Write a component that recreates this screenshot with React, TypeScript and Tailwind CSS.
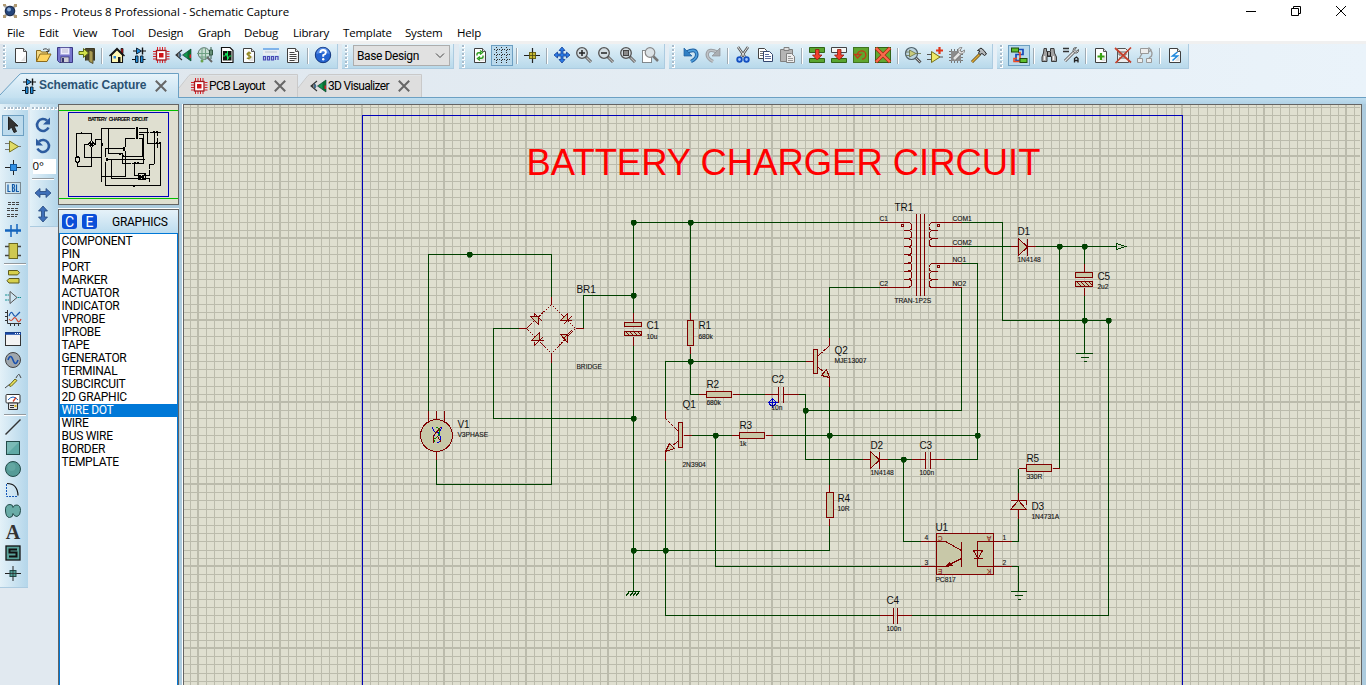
import React from "react";

type P = { children: React.ReactNode; s?: number };

const Ico = ({ children, s = 18 }: P) => (
  <svg width={s} height={s} viewBox="0 0 18 18" fill="none" className="shrink-0">
    {children}
  </svg>
);

const Page = ({ children }: { children?: React.ReactNode }) => (
  <Ico>
    <path d="M3.5 2.5h8l3 3v11h-11z" fill="#fdfdfd" stroke="#3f3f3f" />
    <path d="M5 15h8.5V9L9 15z" fill="#e2e2e2" />
    <path d="M11.5 2.5v3h3" stroke="#555" fill="#ddd" />
    {children}
  </Ico>
);

const Lens = ({ children }: { children?: React.ReactNode }) => (
  <Ico>
    <path d="M10.5 10.5l5.5 5.5" stroke="#5d5d5d" strokeWidth="3" />
    <path d="M11.5 11.5l4.5 4.5" stroke="#b9b9b9" strokeWidth="1.2" />
    <circle cx="7" cy="7" r="5.3" fill="#d3dde2" stroke="#555" strokeWidth="1.3" />
    {children}
  </Ico>
);

const SchemIcon = () => (
  <Ico>
    <path d="M3 5h3M12 5h4M2 13.500h4M12 13.500h3.500" stroke="#111" strokeWidth="1.200" />
    <path d="M6.500 2l5 3-5 3z" fill="#1f8fe0" stroke="#123" />
    <path d="M12.500 1.500v7" stroke="#111" strokeWidth="1.400" />
    <path d="M5.500 10h2.500v6.500H5.500zM10.500 10H13v6.500h-2.500z" fill="#1f8fe0" stroke="#123" />
  </Ico>
);

const PcbIcon = () => (
  <Ico>
    <path d="M5.500 1v3M8 1v3M10.500 1v3M13 1v3M5.500 14v3M8 14v3M10.500 14v3M13 14v3M1 5.500h3M1 8h3M1 10.500h3M1 13h3M14.500 5.500h3M14.500 8h3M14.500 10.500h3M14.500 13h3" stroke="#d8232a" />
    <rect x="4.500" y="4.500" width="9.500" height="9.500" fill="#fff" stroke="#a51a1e" strokeWidth="1.300" />
    <rect x="7" y="7" width="4.500" height="4.500" fill="#d01318" />
  </Ico>
);

const VisIcon = () => (
  <Ico>
    <path d="M8 4L2 9l6 5M2 9h3" stroke="#333" strokeWidth="1.100" />
    <path d="M5.500 6.500q3 2.500 0 5.500z" fill="#2f9bea" stroke="#345" strokeWidth=".7" />
    <path d="M8.500 9l8.500-6v12z" fill="#14994e" stroke="#123" strokeWidth=".6" />
    <path d="M13.500 5.500l3.500-2.500v12l-3.500-2.500z" fill="#0b6b32" />
    <path d="M15.500 8.500H17V12h-1.500z" fill="#d2222a" />
  </Ico>
);

const ic = {
  new: <Page />,
  open: (
    <Ico>
      <path d="M2.500 15.500v-11h4l1 1.500h6v2" fill="#f4d983" stroke="#8a6a1d" />
      <path d="M2.500 15.500L6 8h11l-4 7.500z" fill="#ffd45f" stroke="#8a6a1d" />
      <path d="M9 3.500q4-2 5.500 1.500M15 2.500v3h-3" stroke="#444" />
    </Ico>
  ),
  save: (
    <Ico>
      <path d="M1.500 1.500h15v15h-13l-2-2z" fill="#7674cc" stroke="#3a3885" />
      <rect x="4.500" y="2" width="9" height="6.500" fill="#eef" stroke="#aaaadd" strokeWidth=".6" />
      <path d="M6 4h6M6 6h6" stroke="#b9b9cf" />
      <rect x="5" y="11" width="8" height="5.500" fill="#cfcfd8" stroke="#34346b" strokeWidth=".7" />
      <rect x="6" y="12" width="2" height="4" fill="#34346b" />
    </Ico>
  ),
  exit: (
    <Ico>
      <path d="M7.500 14.500v-12h9v12" fill="#4d4730" stroke="#3d3820" />
      <path d="M11 4l4 1.500v12l-4-2z" fill="#a99b52" stroke="#3d3820" strokeWidth=".8" />
      <path d="M1 5.500h4.500v-3l5 4.500-5 4.500v-3H1z" fill="#d3e14a" stroke="#5c6a14" />
    </Ico>
  ),
  home: (
    <Ico>
      <path d="M13 2.500h2v5h-2z" fill="#d01318" stroke="#111" strokeWidth=".8" />
      <path d="M3.500 9v7.500h11V9L9 3.500z" fill="#fff8b5" stroke="#111" strokeWidth="1.100" />
      <path d="M1.500 10L9 2.500l7.500 7.500" stroke="#111" strokeWidth="1.400" />
      <path d="M5.500 10h2.500v2.500H5.500z" fill="#2d86d8" />
      <path d="M10 11h2.500v5.500H10z" fill="#151515" />
    </Ico>
  ),
  gerber: (
    <Ico>
      <circle cx="8" cy="7.500" r="5.800" fill="#c6dcd2" stroke="#5c7469" />
      <path d="M1 7.500h12M3.500 11h9M6 2v12M9.500 2v12" stroke="#6fa184" />
      <path d="M15 1v12M13.500 4h3v5h-3z" stroke="#345a46" fill="#98c6a8" />
      <path d="M11 11l5 5" stroke="#666" strokeWidth="2" />
      <circle cx="6" cy="15" r="1.500" fill="#69a34b" />
    </Ico>
  ),
  explorer: (
    <Ico>
      <path d="M3.500 1.500h8.500l3 3v12H3.500z" fill="#fff" stroke="#111" strokeWidth="1.200" />
      <rect x="5" y="5" width="8.500" height="9.500" fill="#101810" />
      <path d="M5 10h2l1-3 2 6 1.200-3h2.300M9.500 5v9" stroke="#13e35b" />
    </Ico>
  ),
  bill: (
    <Page>
      <path d="M11 7.500Q9 6 7.500 7.200T9 9.500t1.500 2.300T6.800 12M9 5.500v8" stroke="#8c8014" strokeWidth="1.200" />
    </Page>
  ),
  code: (
    <Ico>
      <path d="M1 2h16v2H1z" fill="#7fb3ea" />
      <path d="M1 4h16v5H1z" fill="#e9edf2" />
      <path d="M3 6h12" stroke="#b9c3cf" />
      <path d="M1.500 10.500h2v3.500h-2zM5.500 10.500h2v3.500h-2zM9.500 10.500h2v3.500h-2zM13.500 14v-3.500h2.500V14" stroke="#4a48b5" strokeWidth="1.200" />
    </Ico>
  ),
  notes: (
    <Page>
      <path d="M5.500 6.500h5M5.500 8.500h7M5.500 10.500h7M5.500 12.500h7M5.500 14.500h5" stroke="#444" />
    </Page>
  ),
  help: (
    <Ico>
      <circle cx="9" cy="9" r="7.700" fill="#2563cf" stroke="#12367f" />
      <path d="M2.500 8a6.500 6.500 0 0113 0q-6-3-13 0z" fill="#6a9cec" opacity=".7" />
      <path d="M6.300 7q0-3 2.800-3t2.800 2.500Q11.900 8 9.200 9.200v1.500" stroke="#fff" strokeWidth="1.900" />
      <circle cx="9.200" cy="13.300" r="1.200" fill="#fff" />
    </Ico>
  ),
  refresh: (
    <Page>
      <path d="M6 9.500V8q0-1.500 4-1.500M9 4.500l2.500 2L9 8.500M12 9.500V11q0 1.500-4 1.500M9 10.500l-2.500 2 2.500 2" stroke="#2c9d1d" strokeWidth="1.400" />
    </Page>
  ),
  grid: (
    <svg width="18" height="18" viewBox="0 0 18 18" fill="none" shapeRendering="crispEdges" className="shrink-0">
      <path d="M1 3.500h16M1 8.500h16M1 13.500h16M3.500 1v16M8.500 1v16M13.500 1v16" stroke="#2b2b2b" strokeDasharray="1 1.500" />
    </svg>
  ),
  origin: (
    <Ico>
      <path d="M1 9.500h16M9.500 2v15" stroke="#222" strokeWidth="1.200" />
      <rect x="6.500" y="6.500" width="6" height="6" fill="#c6bb35" stroke="#6c651a" />
      <path d="M9.500 6v7M6 9.500h7" stroke="#4b4712" strokeWidth=".8" />
    </Ico>
  ),
  pan: (
    <Ico>
      <path d="M9 1l3 3.500h-2V8h3.500V6L17 9l-3.500 3v-2H10v3.500h2L9 17l-3-3.500h2V10H4.500v2L1 9l3.500-3v2H8V4.500H6z" fill="#2b7be6" stroke="#143f96" strokeWidth=".8" />
    </Ico>
  ),
  zin: <Lens><path d="M4 7h6M7 4v6" stroke="#222" strokeWidth="1.500" /></Lens>,
  zout: <Lens><path d="M4 7h6" stroke="#222" strokeWidth="1.500" /></Lens>,
  zall: <Lens><rect x="4.500" y="4.500" width="5" height="5" fill="#8a8a8a" stroke="#444" /></Lens>,
  zarea: (
    <Ico>
      <rect x="1.500" y="4.500" width="9" height="12" fill="#fff" stroke="#222" strokeDasharray="1 1" />
      <path d="M12 10l5 5" stroke="#777" strokeWidth="2.500" />
      <circle cx="9" cy="6.500" r="4.800" fill="#dbe2e6" stroke="#888" strokeWidth="1.200" />
    </Ico>
  ),
  undo: (
    <Ico>
      <path d="M4 6.500Q13 2 14.500 7T9 15.500" stroke="#1f5f9f" strokeWidth="3.600" />
      <path d="M4 6.500Q13 2 14.500 7T9 15.500" stroke="#4fa0dd" strokeWidth="1.600" />
      <path d="M2 2v8h8z" fill="#2f7fc4" stroke="#1f5f9f" strokeWidth=".7" />
    </Ico>
  ),
  redo: (
    <Ico>
      <path d="M14 6.500Q5 2 3.500 7T9 15.500" stroke="#9b9fa3" strokeWidth="3.400" />
      <path d="M14 6.500Q5 2 3.500 7T9 15.500" stroke="#c0c4c8" strokeWidth="1.400" />
      <path d="M16 2v8H8z" fill="#aaaeb2" stroke="#8d9195" strokeWidth=".7" />
    </Ico>
  ),
  cut: (
    <Ico>
      <path d="M4 1l7 10M14 1L7 11" stroke="#555" strokeWidth="2.600" />
      <path d="M4 1l7 10M14 1L7 11" stroke="#e6e6e6" strokeWidth="1" />
      <circle cx="5.500" cy="13.500" r="2.300" stroke="#1450c0" strokeWidth="1.800" fill="#9dc3ff" />
      <circle cx="12.500" cy="13.500" r="2.300" stroke="#1450c0" strokeWidth="1.800" fill="#9dc3ff" />
    </Ico>
  ),
  copy: (
    <Ico>
      <path d="M2.500 2.500h6l2 2v8h-8z" fill="#fff" stroke="#444" />
      <path d="M4 5.500h4M4 7.500h4M4 9.500h4" stroke="#777" />
      <path d="M7.500 5.500h6l3 3v7h-9z" fill="#fff" stroke="#34466f" />
      <path d="M9 8.500h4M9 10.500h6M9 12.500h6" stroke="#5c6fa0" />
    </Ico>
  ),
  paste: (
    <Ico>
      <path d="M2.500 3.500h12v12h-12z" fill="#b5b5b5" stroke="#808080" />
      <path d="M6 1.500h5v3H6z" fill="#ddd" stroke="#808080" />
      <path d="M8.500 7.500h5l3 3v6h-8z" fill="#eee" stroke="#808080" />
      <path d="M10 10.500h3M10 12.500h5M10 14.500h5" stroke="#999" />
    </Ico>
  ),
  blkCopy: (
    <Ico>
      <path d="M1.500 1.500h15v5h-15zM1.500 12.500h15v4h-15z" fill="#59a52f" stroke="#2f6416" />
      <path d="M7.500 3.500h3.500V9h3l-4.800 5L4.500 9h3z" fill="#f2402c" stroke="#8f1a10" strokeWidth=".8" />
    </Ico>
  ),
  blkMove: (
    <Ico>
      <path d="M1.500 1.500h15v5h-15z" fill="#f3f6f4" stroke="#444" />
      <path d="M1.500 12.500h15v4h-15z" fill="#59a52f" stroke="#2f6416" />
      <path d="M7.500 3.500h3.500V9h3l-4.800 5L4.500 9h3z" fill="#f2402c" stroke="#8f1a10" strokeWidth=".8" />
    </Ico>
  ),
  blkRot: (
    <Ico>
      <rect x="1.500" y="1.500" width="15" height="15" fill="#5fa62e" stroke="#3f7420" />
      <path d="M5.500 9a4.200 4.200 0 114.500 4.200M2.500 8.500h6.500L5.500 12z" stroke="#c33a16" strokeWidth="1.300" />
    </Ico>
  ),
  blkDel: (
    <Ico>
      <rect x="1.500" y="1.500" width="15" height="15" fill="#62a832" stroke="#2f6416" />
      <path d="M2 2l14 14M16 2L2 16" stroke="#a32512" strokeWidth="3.600" />
      <path d="M2 2l14 14M16 2L2 16" stroke="#fa6a4c" strokeWidth="2.300" />
    </Ico>
  ),
  pick: (
    <Ico>
      <path d="M11 11l5.500 5.500" stroke="#555" strokeWidth="3" />
      <path d="M12 12l4 4" stroke="#c5c5c5" />
      <circle cx="7.500" cy="7.500" r="6" fill="#bcd4df" stroke="#506068" strokeWidth="1.200" />
      <path d="M5.500 4l6.500 3.500-6.500 3.500zM2 6h3.500M2 9.500h3.500M12 7.500h5" fill="#c9cb7a" stroke="#66704a" strokeWidth=".8" />
    </Ico>
  ),
  make: (
    <Ico>
      <path d="M1 8.500h5M1 13.500h5M12 11h5" stroke="#555" strokeWidth="1.200" />
      <path d="M5.500 5.500L14 11l-8.500 5.500z" fill="#efe968" stroke="#77721c" />
      <path d="M10 4.500h7M13.500 1v7" stroke="#e0361a" strokeWidth="2.200" />
    </Ico>
  ),
  pack: (
    <Ico>
      <path d="M3.500 3v14M6.500 3v14M9.500 3v14M12.500 3v14M1 5.500h14M1 8.500h14M1 11.500h14M1 14.500h14" stroke="#777" />
      <rect x="3" y="5" width="10" height="10" fill="#8c8c8c" />
      <path d="M6 13l7-7" stroke="#777" strokeWidth="4" />
      <path d="M6 13l7-7" stroke="#e4e4e4" strokeWidth="2.600" />
      <path d="M16.500 4l-3 2-1.500-1.500 2-3q-4-.5-4 3.500 1 4 5 2.500 2-1 1.500-3.500z" fill="#e4e4e4" stroke="#777" strokeWidth=".8" />
    </Ico>
  ),
  hammer: (
    <Ico>
      <path d="M2 16l8-8" stroke="#5f4a12" strokeWidth="3" />
      <path d="M2 16l7.500-7.500" stroke="#dca93a" strokeWidth="1.600" />
      <path d="M7.500 4.500L11 2l3 2.500L16.500 8l-2 1.500-2.500-2-2 1-1.500-1.500 1.500-2z" fill="#b5b9bc" stroke="#222" />
    </Ico>
  ),
  auto: (
    <Ico>
      <path d="M9 3.500h4v5H6v6h6" stroke="#174bb8" strokeWidth="1.700" />
      <path d="M8 6.500h2v9H4v-3h3" stroke="#f04a24" strokeWidth="1.600" />
      <rect x="1.500" y="2" width="7" height="4" fill="#5fc02e" stroke="#1e4d0c" />
      <rect x="10" y="12.500" width="7" height="4" fill="#5fc02e" stroke="#1e4d0c" />
    </Ico>
  ),
  find: (
    <Ico>
      <path d="M4 2.500h2.500v3h4v-3H14l.5 4.500 2 4v4.500h-5V10.500H7v5H2V11l1.500-4z" fill="#a2a2a2" stroke="#3c3c3c" />
      <path d="M4.500 10v4M13.500 10v4" stroke="#f2f2f2" strokeWidth="1.500" />
      <path d="M7.500 6v4h3V6" stroke="#222" />
    </Ico>
  ),
  prop: (
    <Ico>
      <path d="M1 2.500h6M1 5.500h6" stroke="#333" strokeWidth="1.300" />
      <path d="M3 15l9-9" stroke="#555" strokeWidth="3" />
      <path d="M3 15l9-9" stroke="#e6e6e6" strokeWidth="1.400" />
      <path d="M16.500 3.500L14 5.500 12.500 4l2-2.500Q11 1 11 4.500q1 3.500 4 2.500 2-1 1.500-3.500z" fill="#ddd" stroke="#555" strokeWidth=".9" />
      <path d="M12.500 16.500v-4l2-1.500 1.500 1.500v4M12.500 14.500H16" stroke="#222" strokeWidth="1.300" />
    </Ico>
  ),
  addSheet: <Page><path d="M5.500 10.500h7M9 7v7" stroke="#38a011" strokeWidth="2.200" /></Page>,
  delSheet: (
    <Ico>
      <path d="M3.500 2.500h8l3 3v11h-11z" fill="#eee" stroke="#555" />
      <path d="M5 6h7v3H5zM5 12h7" stroke="#666" />
      <path d="M1 2l16 14.500M17 1.500L1.500 17" stroke="#c4402c" strokeWidth="1.700" />
    </Ico>
  ),
  parent: (
    <Ico>
      <path d="M4.500 2.500h8v5h-8zM1.500 12.500h5v4h-5zM10.500 12.500h5v4h-5z" fill="#ededed" stroke="#999" />
      <path d="M6 7.500L3.500 12M14 4q3 2 1.500 6L13 12M12.500 1.500L15 4l-2.500 2" stroke="#999" strokeWidth="1.300" />
    </Ico>
  ),
  erc: <Page><path d="M11.500 6l-5 4h5l-5 4.500" stroke="#1d87dc" strokeWidth="1.500" /></Page>,
};

const Grip = () => (
  <div className="flex h-[25px] w-[3px] flex-col justify-between py-px">
    {[0, 1, 2, 3, 4, 5].map((i) => (
      <div key={i} className="size-[3px] border-r border-b border-white bg-[#a9bccb]" />
    ))}
  </div>
);
const HGrip = () => (
  <div className="flex h-[3px] justify-between pl-0.5">
    {[0, 1, 2, 3, 4, 5, 6].map((i) => (
      <div key={i} className="size-[3px] border-r border-b border-white bg-[#a9bccb]" />
    ))}
  </div>
);
const Sep = () => (
  <div className="flex w-2 justify-center py-1">
    <div className="w-0.5 border-r border-white bg-[#9fabb4]" />
  </div>
);
const Btn = ({ children, on }: { children: React.ReactNode; on?: boolean }) => (
  <div className={on ? "mt-px flex h-[21px] w-[22px] items-start justify-center border border-[#6d9fc2] bg-[#b9d9ec]" : "flex h-[22px] w-[22px] items-center justify-center"}>
    {children}
  </div>
);
const strip = "flex h-[25px] border-r border-b border-[#accbe0] bg-linear-to-b from-[#e3f1f8] to-[#b8d9eb]";

const Tools = () => (
  <div className="flex h-[25px] pl-[3px]">
    <div className={`${strip} w-[335px]`}>
      <Grip />
      <div className="flex pl-1">
        {[ic.new, ic.open, ic.save, ic.exit].map((n, i) => <Btn key={i}>{n}</Btn>)}
        <Sep />
        {[ic.home, <SchemIcon key="s" />, <PcbIcon key="p" />, <VisIcon key="v" />, ic.gerber, ic.explorer, ic.bill, ic.code, ic.notes].map((n, i) => <Btn key={i}>{n}</Btn>)}
        <Sep />
        <Btn>{ic.help}</Btn>
      </div>
    </div>
    <div className={`${strip} ml-1 w-[112px] pl-[3px]`}>
      <Grip />
      <div className="mt-px ml-[5px] flex h-[21px] w-[97px] shrink-0 items-center justify-between border border-[#adadad] bg-[#e1e1e1] pr-1 pl-[3px] font-['Roboto',sans-serif] text-[12px] tracking-[-0.400px] whitespace-nowrap">
        Base Design
        <svg width="10" height="6" viewBox="0 0 10 6" fill="none"><path d="M1 .5l4 4 4-4" stroke="#444" /></svg>
      </div>
    </div>
    <div className={`${strip} ml-[5px] w-[206px] pl-[3px]`}>
      <Grip />
      <div className="flex pl-1">
        <Btn>{ic.refresh}</Btn>
        <Btn on>{ic.grid}</Btn>
        <Sep />
        <Btn>{ic.origin}</Btn>
        <Sep />
        {[ic.pan, ic.zin, ic.zout, ic.zall, ic.zarea].map((n, i) => <Btn key={i}>{n}</Btn>)}
      </div>
    </div>
    <div className={`${strip} ml-1 w-[324px] pl-[3px]`}>
      <Grip />
      <div className="flex pl-[5px]">
        <Btn>{ic.undo}</Btn>
        <Btn>{ic.redo}</Btn>
        <Sep />
        {[ic.cut, ic.copy, ic.paste].map((n, i) => <Btn key={i}>{n}</Btn>)}
        <Sep />
        {[ic.blkCopy, ic.blkMove, ic.blkRot, ic.blkDel].map((n, i) => <Btn key={i}>{n}</Btn>)}
        <Sep />
        {[ic.pick, ic.make, ic.pack, ic.hammer].map((n, i) => <Btn key={i}>{n}</Btn>)}
      </div>
    </div>
    <div className={`${strip} ml-1 w-[192px] pl-[3px]`}>
      <Grip />
      <div className="flex pl-[5px]">
        <Btn on>{ic.auto}</Btn>
        <Sep />
        <Btn>{ic.find}</Btn>
        <Btn>{ic.prop}</Btn>
        <Sep />
        {[ic.addSheet, ic.delSheet, ic.parent].map((n, i) => <Btn key={i}>{n}</Btn>)}
        <Sep />
        <Btn>{ic.erc}</Btn>
      </div>
    </div>
  </div>
);

const CloseX = () => (
  <svg width="12" height="12" viewBox="0 0 12 12" className="shrink-0"><path d="M.8.8l10.400 10.400M11.200.8L.8 11.200" stroke="#666" strokeWidth="2" /></svg>
);

const Tabs = () => (
  <div className="flex h-[25px] items-end">
    <div className="relative flex h-[25px] w-[179px] items-center pl-[20px]">
      <svg width="179" height="25" viewBox="0 0 179 25" fill="none" className="absolute inset-0">
        <defs><linearGradient id="tabOn" x1="0" y1="0" x2="0" y2="1"><stop offset="0" stopColor="#e8f4fb" /><stop offset="1" stopColor="#c3e0f0" /></linearGradient></defs>
        <path d="M0 25v-3L19 2q1-1.500 3-1.500h156.500V25z" fill="url(#tabOn)" />
        <path d="M0 22L19 2q1-1.500 3-1.500h156.500V25" stroke="#6ba0c3" />
      </svg>
      <div className="relative flex items-center">
        <SchemIcon />
        <span className="ml-px w-[116px] pb-px font-['Liberation_Sans',sans-serif] text-[12px] font-bold tracking-[-0.080px] whitespace-nowrap text-[#2a5273]">Schematic Capture</span>
        <CloseX />
      </div>
    </div>
    <div className="relative flex h-[24px] w-[119px] items-center pl-[11px]">
      <svg width="119" height="24" viewBox="0 0 119 24" fill="none" className="absolute inset-0">
        <path d="M0 14L11 1.500h107V24H0z" fill="#dedede" />
        <path d="M0 14L10 1.500Q11 .5 13 .5h105.500V24" stroke="#c9c9c9" />
        <path d="M0 23.500h119" stroke="#6ba0c3" />
      </svg>
      <div className="relative flex items-center">
        <PcbIcon />
        <span className="ml-px w-[65px] font-['Roboto',sans-serif] text-[12px] tracking-[-0.600px] whitespace-nowrap">PCB Layout</span>
        <CloseX />
      </div>
    </div>
    <div className="relative flex h-[24px] w-[124px] items-center pl-[11px]">
      <svg width="124" height="24" viewBox="0 0 124 24" fill="none" className="absolute inset-0">
        <path d="M0 14L11 1.500h112V24H0z" fill="#dedede" />
        <path d="M0 14L10 1.500Q11 .5 13 .5h110.500V24" stroke="#c9c9c9" />
        <path d="M0 23.500h124" stroke="#6ba0c3" />
      </svg>
      <div className="relative flex items-center">
        <VisIcon />
        <span className="ml-px w-[70px] font-['Roboto',sans-serif] text-[12px] tracking-[-0.680px] whitespace-nowrap">3D Visualizer</span>
        <CloseX />
      </div>
    </div>
    <div className="h-px flex-1 bg-[#6ba0c3]" />
  </div>
);

const modes1 = [
  <Ico key="1"><path d="M4.500 1v13l3-3 2.500 5.500 2.500-1L10 10h4z" fill="#333" stroke="#222" /></Ico>,
  <Ico key="2"><path d="M1 6.500h4M1 12.500h4M13 9.500h4" stroke="#777" /><path d="M5.500 4l9 5.500-9 5.500z" fill="#e1dc66" stroke="#77741f" /></Ico>,
  <Ico key="3"><path d="M1 9.500h16M9.500 2v15" stroke="#222" /><rect x="6.500" y="6.500" width="6" height="6" fill="#2f8fe4" stroke="#12599f" /></Ico>,
  <Ico key="4"><rect x="1.500" y="3.500" width="15" height="11" stroke="#333" strokeDasharray="1 1" /><path d="M4 5.500v7h2.500M12.500 5.500v7H15M8.500 5.500v7h1.500q1.300-1.800 0-3.500 1.300-1.800 0-3.500zM8.500 9H10" stroke="#125aa8" strokeWidth="1.200" /></Ico>,
  <Ico key="5"><path d="M4 2.500h11M4 4.500h11M3 8.500h12M3 10.500h12M3 14.500h12M3 16.500h10" stroke="#444" strokeDasharray="3 1" /></Ico>,
  <Ico key="6"><path d="M1 9.500h16" stroke="#1464bd" strokeWidth="2.500" /><path d="M7 4v5M13 3v6M7 10v6M13 10v3" stroke="#1464bd" strokeWidth="1.500" /></Ico>,
  <Ico key="7"><path d="M1 4.500h4M1 13.500h4M13 4.500h4M13 13.500h4" stroke="#444" strokeWidth="1.300" /><rect x="5" y="1.500" width="8.500" height="15" fill="#cfc850" stroke="#6b6720" /></Ico>,
];
const modes2 = [
  <Ico key="1"><path d="M4.500 3.500h9l2 2.200-2 2.200h-9zM5 11.500h10v4.500H5l-2-2.250z" fill="#d6d04c" stroke="#5f5c1d" /></Ico>,
  <Ico key="2"><path d="M1 7h4M1 12h4M13.500 9.500H17" stroke="#179091" strokeDasharray="2 .5" /><path d="M6 3.500l7 6-7 6z" stroke="#555" /></Ico>,
  <Ico key="3"><path d="M3.500 1v13.500H17M1 3.500h2M1 7.500h2M1 11.500h2M6.500 14v3M10.500 14v3M14.500 14v3" stroke="#333" /><path d="M5 7q2-6 4-2t4 1l3-3" stroke="#1b59ae" strokeWidth="1.200" /><path d="M5 10q2 3 4 0t4 1 4-1" stroke="#d2422a" strokeWidth="1.200" /></Ico>,
  <Ico key="4"><rect x="1.500" y="2.500" width="15" height="13" fill="#f3f3f3" stroke="#333" /><path d="M1 3.500h16" stroke="#1647a6" strokeWidth="2.500" /><path d="M11 3.500h5" stroke="#fff" strokeDasharray="1 1" /></Ico>,
  <Ico key="5"><circle cx="9" cy="9" r="7.500" fill="#9fa7ad" stroke="#444" /><path d="M4 9q2.500-7 5 0t5 0" stroke="#174fae" strokeWidth="1.600" /></Ico>,
  <Ico key="6"><path d="M1 16l5-4M12 6q3-6 4-2l1 2" stroke="#444" /><path d="M5 13.500l6-6.500 2 1.500-6 6z" fill="#e9e35b" stroke="#66621a" /></Ico>,
  <Ico key="7"><rect x="2" y="1.500" width="14" height="8.500" rx="1" fill="#fff" stroke="#333" /><path d="M4 7q5-6 10 0" stroke="#1b62bd" /><path d="M9 8.500l3-4" stroke="#d23a22" strokeWidth="1.300" /><path d="M4.500 10v6.500h9V10z" fill="#e3e3e3" stroke="#333" /><path d="M6 12.500h4M6 14.500h4" stroke="#333" /><path d="M11.500 12v2" stroke="#d5b416" strokeWidth="2" /></Ico>,
];
const modes3 = [
  <Ico key="1"><path d="M1.500 16.500l15-15" stroke="#333" strokeWidth="1.400" /></Ico>,
  <Ico key="2"><rect x="2.500" y="2.500" width="13" height="13" fill="#5fa9a5" stroke="#244c4a" /><path d="M3 3h12L3 15z" fill="#86c2bd" opacity=".7" /></Ico>,
  <Ico key="3"><circle cx="9" cy="9" r="7.500" fill="#559b97" stroke="#244c4a" /><circle cx="7.500" cy="7" r="4" fill="#6dafaa" opacity=".6" /></Ico>,
  <Ico key="4"><path d="M2.500 3v12.500H14" stroke="#1658b8" strokeDasharray="2 1" /><path d="M3 2.500q10.500 0 11 12" stroke="#111" strokeWidth="1.200" /></Ico>,
  <Ico key="5"><path d="M6 2.500q3 0 3 3 1-3 4-2.500 3.500.5 3.500 5.500T13 14.500q-3 0-4-3 0 4-3.500 4T1.500 9 6 2.500z" fill="#69aca7" stroke="#244c4a" /></Ico>,
  <span key="6" className="font-['Liberation_Serif',serif] text-[20px] leading-[18px] font-bold text-[#333]">A</span>,
  <Ico key="7"><rect x="2" y="2" width="14" height="14" fill="#5aa39b" stroke="#111" strokeWidth="1.300" /><path d="M13 5.500H5.500v3h7v4H5" stroke="#111" strokeWidth="2" /></Ico>,
  <Ico key="8"><path d="M1 8.500h16M9 1v15" stroke="#222" /><rect x="6" y="5.500" width="6" height="6" fill="#4f9c94" stroke="#244c4a" /><path d="M9 5v7M6 8.500h6" stroke="#222" strokeWidth=".7" /></Ico>,
];
const VSep = () => (
  <div className="flex h-1 w-full items-center pl-0.5"><div className="h-0.5 w-[22px] border-b border-white bg-[#93999d]" /></div>
);
const Slot = ({ children, on }: { children: React.ReactNode; on?: boolean }) => (
  <div className={on ? "flex h-[21px] w-[22px] items-start justify-center border border-[#6d9fc2] bg-[#bcdaec]" : "flex h-[21px] w-[22px] items-start justify-center pt-px"}>{children}</div>
);

const vstrip = "flex flex-col border-b border-[#accbe0] bg-linear-to-r from-[#e3f1f8] to-[#b4d6ea]";

const G = "#004000";
const R = "#800000";

const wires: string[] = [
  "M428 410V254H551V296", "M551 362V484H436V459", "M518 328H493V418H633", "M583 328V295H633",
  "M633 312V222H879", "M633 345V591", "M690 222V312", "M690 353V394H698", "M739 394H764",
  "M798 394H805V459H862", "M887 459H911", "M945 459H977V263H961", "M805 410H961V287",
  "M961 222H1002V320H1108V615H911", "M961 246H1010", "M1035 246H1116", "M1084 246V263", "M1084 295V353",
  "M879 287H829V337", "M805 361H665V410", "M829 386V484", "M829 525V550H633", "M691 435H731", "M772 435H977",
  "M665 460V615H879", "M715 435V566H920", "M903 459V541H920", "M1011 541H1018V518", "M1018 492V468",
  "M1059 468V246", "M1011 566H1018V591",
];
const pins: string[] = [
  "M428 410v12M436 410v9M444 410v12M436 451v8", "M551 296v8M551 353v9M518 328h8M575 328h8",
  "M633 312v10M633 336v9", "M1084 263v9M1084 287v8", "M690 312v8M690 346v7", "M698 394h8M732 394h7",
  "M764 394h14M783 394h15", "M862 459h8M879 459h8", "M911 459h14M930 459h15", "M933 263h28M933 287h28M933 222h28M933 246h28",
  "M1010 246h8M1027 246h8", "M879 222h28M879 287h28", "M829 337v8M829 377v9M805 361h8", "M829 484v8M829 518v7",
  "M665 410v8M665 451v9M683 435h8", "M731 435h8M765 435h7", "M879 615h14M897 615h14", "M920 541h16M920 566h16M993 541h18M993 566h18",
  "M1018 518v-9M1018 500v-8", "M1018 468h8M1052 468h7",
  "M778 386v16M783 386v16M925 451v17M930 451v17M893 607v16M897 607v16",
];
const dots = [
  [469, 254], [633, 222], [633, 295], [633, 418], [690, 222], [690, 361], [805, 410], [829, 435], [715, 435],
  [633, 550], [665, 550], [903, 459], [977, 435], [1059, 246], [1084, 246], [1084, 320], [1108, 320],
];
const big: [string, number, number][] = [
  ["TR1", 894, 211], ["D1", 1017, 235], ["C5", 1097, 280], ["BR1", 576, 293], ["C1", 646, 329], ["R1", 698, 329],
  ["Q2", 834, 354], ["R2", 706, 388], ["C2", 771, 383], ["Q1", 682, 408], ["R3", 739, 429], ["V1", 457, 428],
  ["D2", 870, 449], ["C3", 919, 449], ["R5", 1026, 462], ["R4", 837, 502], ["D3", 1031, 510], ["U1", 935, 531], ["C4", 886, 604],
];
const small: [string, number, number][] = [
  ["C1", 879, 221], ["C2", 879, 286], ["COM1", 952, 221], ["COM2", 952, 245], ["NO1", 952, 262], ["NO2", 952, 286],
  ["TRAN-1P2S", 894, 303], ["1N4148", 1017, 262], ["2u2", 1097, 289], ["BRIDGE", 576, 369], ["10u", 646, 339], ["680k", 698, 339],
  ["MJE13007", 834, 363], ["680k", 706, 405], ["10n", 771, 410], ["2N3904", 682, 467], ["1k", 739, 446], ["V3PHASE", 457, 437],
  ["1N4148", 870, 475], ["100n", 919, 475], ["330R", 1026, 479], ["10R", 837, 511], ["1N4731A", 1031, 519], ["PC817", 935, 582],
  ["100n", 886, 631], ["4", 924, 540], ["3", 924, 565], ["1", 1002, 540], ["2", 1002, 565],
];
const cols = Array.from({ length: 144 }, (_, i) => i - 21);
const rows = Array.from({ length: 72 }, (_, i) => i - 6);

const Bump = ({ x, y, n, d }: { x: number; y: number; n: number; d: number }) => (
  <>
    {Array.from({ length: n }, (_, i) => {
      const a = y + i * 8.1;
      return <path key={i} d={`M${x} ${a}c${d * 6} 0 ${d * 6} 8.100 0 8.100${i < n - 1 ? `h${-d * 4}` : ""}`} />;
    })}
  </>
);

const Schematic = () => (
  <svg width="1177" height="580" viewBox="184 105 1177 580" className="block bg-[#dfdfd0]" shapeRendering="crispEdges">
    <g fill="#bbbbac">
      {cols.map((k) => (k % 10 === 0
        ? <rect key={k} x={361 + k * 8.2} y="105" width="2" height="580" />
        : <rect key={k} x={Math.round(362 + k * 8.2)} y="105" width="1" height="580" />))}
      {rows.map((k) => (k % 10 === 0
        ? <rect key={k} x="184" y={155 + k * 8.2} width="1176" height="2" />
        : <rect key={k} x="184" y={Math.round(156 + k * 8.2)} width="1176" height="1" />))}
    </g>
    <path d="M362.500 685V115.500H1182.500V685" fill="none" stroke="#0000b8" />
    <g transform="translate(.5 .5)" fill="none">
      <g stroke={G}>
        {wires.map((d) => <path key={d} d={d} />)}
        <path d="M1116 243v6l9-3zM1075 353h17M1080 357h8M1083 361h3M1010 591h16M1014 595h8M1017 599h3" />
        <path d="M627 591h12M629 591l-4 5M633 591l-4 5M636 591l-4 5M639 591l-4 5" />
      </g>
      <g fill={G}>
        {dots.map(([x, y]) => <path key={`${x}-${y}`} d={`M${x - 1.5} ${y - 2.5}h3l1 1v3l-1 1h-3l-1-1v-3z`} stroke={G} strokeWidth=".6" />)}
      </g>
      <g stroke={R}>
        <circle cx="436" cy="435" r="16" fill="#c8c8a8" />
        {pins.map((d) => <path key={d} d={d} />)}
        <g fill="#c8c8a8">
          <path d="M624 322h17v4h-17zM1075 272h17v5h-17z" />
          <path d="M624 331h17v4h-17zM1075 281h17v5h-17z" />
          <path d="M687 320h6v25h-6zM706 391h25v6h-25zM739 432h25v6h-25zM826 492h7v25h-7zM1026 464h25v7h-25z" />
          <path d="M813 349h4v24h-4zM678 422h4v25h-4z" />
          <path d="M870 451v17l9-8.500zM1018 238v17l9-8.500zM1010 509h16l-8-9z" />
          <rect x="936" y="533" width="57" height="41" />
        </g>
        <path d="M625 331l4 4M629 331l4 4M633 331l4 4M637 331l4 4M1076 281l5 5M1080 281l5 5M1084 281l5 5M1088 281l4 4" strokeWidth="1.300" />
        <path d="M879 451v17M1027 238v17M1010 500h16v4" />
        <path d="M551 304l-25 24 25 25 24-25z" strokeDasharray="2 1" />
        <g fill="#c8c8a8">
          <path d="M530 316h8v8zM560 320l7-7v7zM531 340h8v-8zM560 334h7v8z" />
        </g>
        <path d="M534 313l8 8M563 324l8-8M534 345l8-8M563 338l8-8M567 313v7h4M539 332v8h4M531 340l8-8M560 334h7M534 313l0 3M534 345v-4" />
        <path d="M817 356l12-11M817 366l12 11M678 431l-13-13M678 440l-13 11" strokeDasharray="3 1" />
        <path d="M829 377l-8-2 5-6zM665 451l4-8 5 5z" fill="#c8c8a8" />
        <path d="M916 213v82M920 213v82M924 213v82" />
        <path d="M901 224h2v2h-2zM937 224h2v2h-2zM937 265h2v2h-2z" />
        <Bump x={907} y={222} n={8} d={1} />
        <Bump x={933} y={222} n={3} d={-1} />
        <Bump x={933} y={263} n={3} d={-1} />
        <path d="M936 541h9l16 9M961 541v25M961 558l-16 8h-9M993 541h-16v25h16M973 550h9l-4.500 8zM973 558h9" />
        <path d="M945 566l4-4 3 3z" fill={R} />
      </g>
      <g fill="none">
        <path d="M432 427q1 5 4 5t4 5-4 5M441 427q-1 5-4 5t-4 5 0 5" stroke="#0000d0" />
        <path d="M436 427q5 1 3 6t-6 5l1 4" stroke="#008a00" />
        <path d="M440 427l-7 8v7M437 436l4 6" stroke={R} />
      </g>
      <g stroke="#0000c8"><circle cx="772" cy="402" r="3" /><path d="M767 402h10M772 397v10M768 402l4-4 4 4-4 4z" /></g>
    </g>
    <g className="font-['Liberation_Sans',sans-serif]" fill="#101010">
      {big.map(([t, x, y]) => <text key={t} x={x + 0.4} y={y} fontSize="10">{t}</text>)}
      {small.map(([t, x, y]) => <text key={`${t}${x}${y}`} x={x + 0.4} y={y} fontSize="6.700" fill="#141414" stroke="#141414" strokeWidth=".120">{t}</text>)}
      {([["C", 940, 538], ["A", 989, 538], ["E", 940, 571], ["K", 989, 571]] as [string, number, number][]).map(([t, x, y]) => (
        <text key={t} x={x} y={y} fontSize="6.600" fill={R} textAnchor="middle" dominantBaseline="central" transform={`rotate(180 ${x} ${y})`}>{t}</text>
      ))}
      <text x="526.500" y="175" fontSize="37" fill="#ff0000" textLength="514" lengthAdjust="spacingAndGlyphs">BATTERY CHARGER CIRCUIT</text>
    </g>
  </svg>
);

const Preview = () => (
  <svg width="119" height="99" viewBox="59 105 119 99" className="block bg-[#dfdfd0]" shapeRendering="crispEdges">
    <path d="M59 110.500h119M59 198.500h119" stroke="#00c000" />
    <rect x="68.500" y="112.500" width="100" height="84" fill="none" stroke="#0000b8" />
    <g transform="translate(23.800 96.600) scale(.123 .145)" fill="none" stroke="#000">
      {[...wires, ...pins, "M936 533h57v41h-57z", "M916 213v82M924 213v82", "M551 304l-25 24 25 25 24-25z", "M706 394h26M739 435h26M690 320v26M829 492v26M1026 468h26"].map((d) => (
        <path key={d} d={d} vectorEffect="non-scaling-stroke" />
      ))}
      <circle cx="436" cy="435" r="18" vectorEffect="non-scaling-stroke" />
      <path d="M940 545l45 25M985 540l-45 25M535 320l30 20M565 318l-30 24M813 349v24M680 422v25M625 325h17M625 333h17" strokeWidth="2" vectorEffect="non-scaling-stroke" />
      {dots.map(([x, y]) => <rect key={`${x}${y}`} x={x - 8} y={y - 7} width="14" height="12" fill="#000" stroke="none" />)}
    </g>
    <text x="88" y="121" fontSize="5" fontWeight="bold" textLength="60" lengthAdjust="spacing" wordSpacing="1.500" className="font-['Liberation_Sans',sans-serif]">BATTERY CHARGER CIRCUIT</text>
  </svg>
);

const menus: [string, string][] = [
  ["File", "w-8"], ["Edit", "w-[34px]"], ["View", "w-[39px]"], ["Tool", "w-9"], ["Design", "w-[50px]"], ["Graph", "w-[46px]"],
  ["Debug", "w-[49px]"], ["Library", "w-[50px]"], ["Template", "w-[62px]"], ["System", "w-[52px]"], ["Help", "w-10"],
];
const items = ["COMPONENT", "PIN", "PORT", "MARKER", "ACTUATOR", "INDICATOR", "VPROBE", "IPROBE", "TAPE", "GENERATOR", "TERMINAL", "SUBCIRCUIT", "2D GRAPHIC", "WIRE DOT", "WIRE", "BUS WIRE", "BORDER", "TEMPLATE"];

export default function App() {
  return (
    <div className="flex h-[685px] w-[1366px] flex-col overflow-hidden bg-white text-black">
      <div className="flex h-6 items-center pl-0.5 font-['Open_Sans',sans-serif] text-[11.5px]">
        <svg width="16" height="16" viewBox="0 0 16 16" className="mb-0.5">
          <path d="M2 2l12 12M14 2L2 14" stroke="#aaa" strokeWidth="2.500" />
          <path d="M1 1h3v2H1zM12 1h3v3h-3zM1 12h3v3H1zM12 12h3v3h-3z" fill="#b19a71" />
          <circle cx="8" cy="8" r="4.800" fill="#25457a" stroke="#12203f" />
          <circle cx="7" cy="6.500" r="2" fill="#86a8d6" />
        </svg>
        <span className="ml-[5px] flex-1 tracking-[-0.060px]">smps - Proteus 8 Professional - Schematic Capture</span>
        <div className="flex items-center gap-[35px] pr-5 pb-[3px]">
          <svg width="10" height="10" viewBox="0 0 10 10"><path d="M0 5.500h10" stroke="#000" /></svg>
          <svg width="10" height="10" viewBox="0 0 10 10" fill="none"><path d="M.5 2.500h7v7h-7zM2.500 2V.5h7v7H8" stroke="#000" /></svg>
          <svg width="10" height="10" viewBox="0 0 10 10"><path d="M0 0l10 10M10 0L0 10" stroke="#000" /></svg>
        </div>
      </div>
      <div className="flex h-[17px] items-center pl-[7px] font-['Open_Sans',sans-serif] text-[11.5px] tracking-[-0.200px]">
        {menus.map(([t, w]) => <span key={t} className={`${w} shrink-0`}>{t}</span>)}
      </div>
      <div className="h-[3px] bg-[#f0f0f0]" />
      <div className="flex h-[54px] flex-col justify-between bg-linear-to-r from-[#dee6ed] to-[#eaf3fa]">
        <Tools />
        <Tabs />
      </div>
      <div className="h-1.5 shrink-0 bg-linear-to-b from-[#bfdef0] to-[#b1d1e4]" />
      <div className="flex h-[581px] bg-[#e1e9f0]">
        <div className="flex h-[3px] w-[58px] items-start bg-[#b5d6e8]">
          <div className={`${vstrip} h-[484px] w-7 shrink-0 pt-[3px] pl-0.5`}>
            <HGrip />
            <div className="mt-[5px] flex flex-col">
              {modes1.map((m, i) => <Slot key={i} on={i === 0}>{m}</Slot>)}
              <VSep />
              {modes2.map((m, i) => <Slot key={i}>{m}</Slot>)}
              <VSep />
              {modes3.map((m, i) => <Slot key={i}>{m}</Slot>)}
            </div>
          </div>
          <div className={`${vstrip} ml-0.5 h-[123px] w-7 shrink-0 items-center pt-[3px]`}>
            <div className="w-full"><HGrip /></div>
            <div className="mt-[6px] flex flex-col items-center pr-0.5">
              <Ico><path d="M13 4.500a6 6 0 101.500 7" stroke="#2d5c9f" strokeWidth="2.600" /><path d="M16 1.500v7H9z" fill="#2d5c9f" /></Ico>
              <div className="mt-[3px]"><Ico><path d="M5 4.500a6 6 0 11-1.500 7" stroke="#2d5c9f" strokeWidth="2.600" /><path d="M2 1.500v7h7z" fill="#2d5c9f" /></Ico></div>
              <div className="mt-1 ml-0.5 h-[15px] w-[23px] bg-white font-['Open_Sans',sans-serif] text-[11.5px] leading-[14px]">0°</div>
              <div className="mt-1 h-0.5 w-[22px] border-b border-white bg-[#93999d]" />
              <div className="mt-1"><Ico><path d="M1 9l5-4.500V7.500h6v-3L17 9l-5 4.500v-3H6v3z" fill="#3e6fb8" stroke="#23467c" strokeWidth=".8" /></Ico></div>
              <div className="mt-[3px]"><Ico><path d="M9 1l4.500 5H10.500v6h3L9 17l-4.500-5h3V6h-3z" fill="#3e6fb8" stroke="#23467c" strokeWidth=".8" /></Ico></div>
            </div>
          </div>
        </div>
        <div className="flex w-[121px] flex-col">
          <div className="h-[101px] border border-[#646464]"><Preview /></div>
          <div className="h-[4px] border-b border-white bg-[#accbde]" />
          <div className="flex flex-1 flex-col border border-b-0 border-[#646464]">
            <div className="flex h-[23px] items-center bg-linear-to-b from-[#e6f2f9] to-[#bcdcee] pl-[3px] font-['Roboto',sans-serif] text-[12px]">
              <span className="flex size-[15px] items-center justify-center rounded-[3px] bg-[#0b4fd8] text-[14px] leading-none text-white">C</span>
              <span className="ml-[5px] flex size-[15px] items-center justify-center rounded-[3px] bg-[#0b4fd8] text-[14px] leading-none text-white">E</span>
              <span className="ml-[15px] tracking-[-0.260px]">GRAPHICS</span>
            </div>
            <div className="flex-1 border border-b-0 border-[#0078d7] bg-white pt-px font-['Roboto',sans-serif] text-[12px] leading-[13px] tracking-[-0.280px]">
              {items.map((t) => (
                <div key={t} className={t === "WIRE DOT" ? "h-[13px] bg-[#0078d7] pl-[1.5px] text-white" : "h-[13px] pl-[1.5px]"}>{t}</div>
              ))}
            </div>
          </div>
        </div>
        <div className="w-1 border-r border-white bg-[#accbde]" />
        <div className="w-[1179px] border border-b-0 border-[#646464]"><Schematic /></div>
        <div className="flex-1 bg-[#accbde]" />
      </div>
    </div>
  );
}
